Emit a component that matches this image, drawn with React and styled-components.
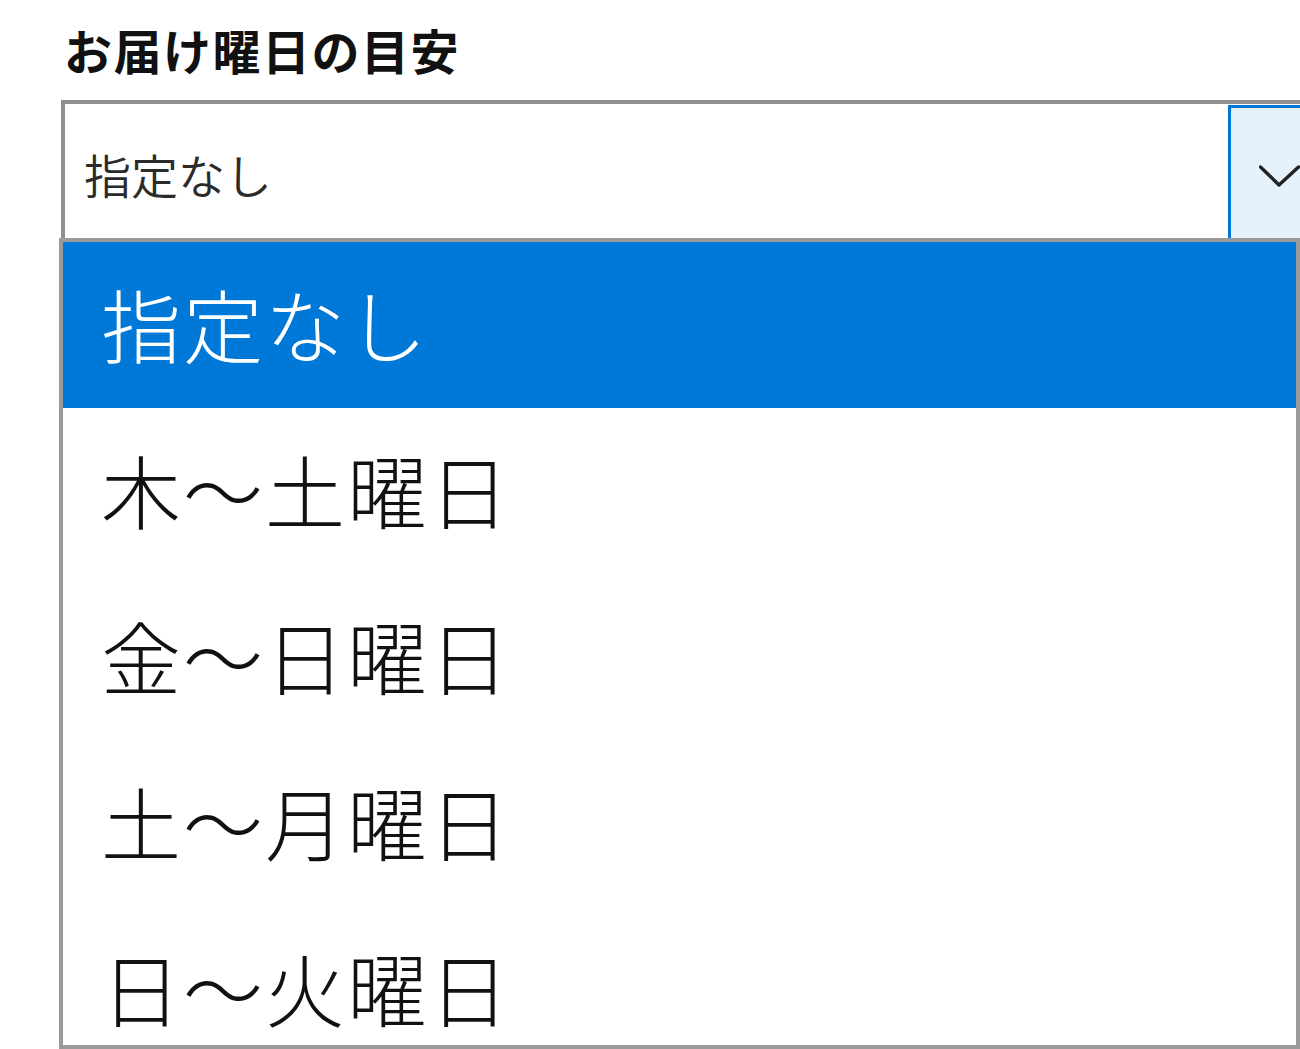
import React from "react";
import styled, { createGlobalStyle } from "styled-components";

const Global = createGlobalStyle`
  html, body {
    margin: 0;
    padding: 0;
    background: #ffffff;
    overflow: hidden;
  }
  body {
    font-family: "Noto Sans CJK JP", "Noto Sans", sans-serif;
  }
`;

const Page = styled.div`
  width: 1300px;
  height: 1049px;
  overflow: hidden;
  padding-top: 20px;
  box-sizing: border-box;
`;

const Field = styled.div`
  margin-left: 61px;
  display: flex;
  flex-direction: column;
`;

const Label = styled.div`
  font-size: 48px;
  line-height: 58px;
  font-weight: 700;
  color: #111111;
  padding-left: 3px;
  margin-bottom: 22px;
  letter-spacing: 1.5px;
`;

const SelectBox = styled.div`
  display: flex;
  width: max-content;
  height: 138px;
  box-sizing: border-box;
  border: 4px solid #8f8f8f;
  border-bottom: none;
  background: #ffffff;
`;

const Value = styled.div`
  width: 1163px;
  box-sizing: border-box;
  padding-left: 19px;
  padding-top: 4px;
  display: flex;
  align-items: center;
  font-size: 47px;
  font-weight: 350;
  color: #2b2b2b;
`;

const ArrowButton = styled.div`
  width: 120px;
  margin-top: 1px;
  height: 133px;
  box-sizing: border-box;
  border: 3px solid #0078d7;
  border-right: none;
  border-bottom: none;
  background: #e5f1fb;
  display: flex;
  align-items: center;
  padding-left: 28px;
  padding-top: 6px;
`;

const ListBox = styled.div`
  margin-left: -2px;
  width: 1241px;
  height: 811px;
  box-sizing: border-box;
  border: 4px solid #9a9a9a;
  background: #ffffff;
  overflow: hidden;
  display: flex;
  flex-direction: column;
`;

const Option = styled.div`
  flex: 0 0 auto;
  height: 166px;
  display: flex;
  align-items: center;
  padding-left: 38px;
  padding-bottom: 6px;
  box-sizing: border-box;
  font-size: 80px;
  font-weight: 300;
  line-height: 1;
  color: ${(p) => (p.$selected ? "#ffffff" : "#111111")};
  background: ${(p) => (p.$selected ? "#0078d7" : "#ffffff")};
  letter-spacing: 2px;
`;

const options = [
  { text: "指定なし", selected: true },
  { text: "木〜土曜日" },
  { text: "金〜日曜日" },
  { text: "土〜月曜日" },
  { text: "日〜火曜日" },
];

export default function App() {
  return (
    <>
      <Global />
      <Page>
        <Field>
          <Label>お届け曜日の目安</Label>
          <SelectBox>
            <Value>指定なし</Value>
            <ArrowButton>
              <svg width="42" height="22" viewBox="0 0 42 22" fill="none">
                <polyline
                  points="1.5,2 20,20 39.5,2"
                  stroke="#222222"
                  strokeWidth="3.4"
                  strokeLinecap="round"
                  strokeLinejoin="round"
                />
              </svg>
            </ArrowButton>
          </SelectBox>
          <ListBox>
            {options.map((o) => (
              <Option key={o.text} $selected={o.selected}>
                {o.text}
              </Option>
            ))}
          </ListBox>
        </Field>
      </Page>
    </>
  );
}
